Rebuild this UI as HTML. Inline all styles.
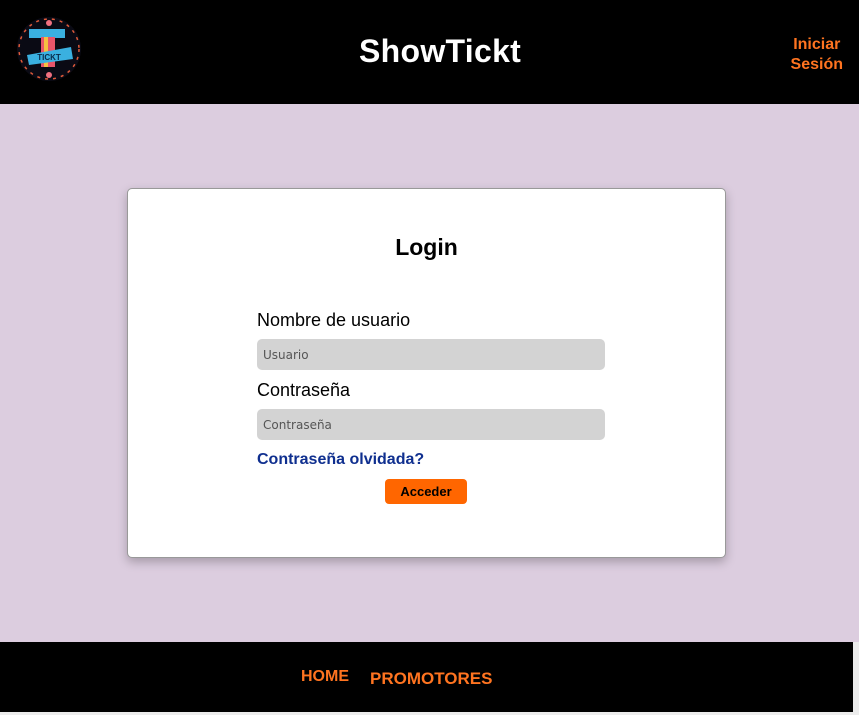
<!DOCTYPE html>
<html><head><meta charset="utf-8"><style>
*{box-sizing:border-box;margin:0;padding:0}
body{width:859px;height:715px;background:#ececec;font-family:"Liberation Sans",Arial,sans-serif;position:relative;overflow:hidden}
.hdr{position:absolute;left:0;top:0;width:859px;height:104px;background:#000}
.title{position:absolute;left:359px;top:33px;color:#fff;font-weight:bold;font-size:32px;letter-spacing:0.3px}
.ini{position:absolute;right:16px;top:35px;color:#ff7420;font-weight:bold;font-size:16px;text-align:center;line-height:20px}
.main{position:absolute;left:0;top:104px;width:859px;height:538px;background:#dccddf}
.card{position:absolute;left:127px;top:188px;width:599px;height:370px;background:#fff;border:1px solid #999;border-radius:5px;box-shadow:0 4px 10px rgba(0,0,0,.25)}
.card h2{position:absolute;top:45px;width:100%;text-align:center;font-size:23px}
.lbl{position:absolute;left:129px;font-size:18px}
.inp{position:absolute;left:129px;width:348px;height:31px;background:#d3d3d3;border-radius:5px;font-size:12px;color:#555;padding:9px 6px;font-family:"DejaVu Sans",sans-serif}
.fg{position:absolute;left:129px;top:262px;color:#0f2f8f;font-weight:bold;font-size:16px}
.btn{position:absolute;left:257px;top:290px;width:82px;height:25px;background:#ff6600;border-radius:4px;font-size:13px;font-weight:bold;text-align:center;line-height:25px}
.ftr{position:absolute;left:0;top:642px;width:853px;height:70px;background:#000}
.ftr span{position:absolute;color:#ff7420;font-weight:bold}
</style></head><body>
<div class="hdr">
<svg style="position:absolute;left:15px;top:15px" width="68" height="68" viewBox="0 0 68 68">
<circle cx="34" cy="34" r="32" fill="#0a0a14"/>
<circle cx="34" cy="34" r="30" fill="none" stroke="#e05a3a" stroke-width="1.5" stroke-dasharray="3 5"/>
<rect x="14" y="14" width="36" height="9" fill="#3ab0e0"/>
<rect x="26" y="22" width="14" height="30" fill="#e8556a"/>
<rect x="29" y="22" width="4" height="30" fill="#f5c040"/>
<polygon points="12,40 56,32 58,44 14,50" fill="#3ab0e0"/>
<text x="34" y="45" font-size="8" font-weight="bold" text-anchor="middle" fill="#0a2a4a" font-family="Liberation Sans">TICKT</text>
<circle cx="34" cy="8" r="3" fill="#f07080"/><circle cx="34" cy="60" r="3" fill="#f07080"/>
</svg>
<div class="title">ShowTickt</div>
<div class="ini">Iniciar<br>Sesión</div>
</div>
<div class="main"></div>
<div class="card">
<h2>Login</h2>
<div class="lbl" style="top:121px">Nombre de usuario</div>
<div class="inp" style="top:150px">Usuario</div>
<div class="lbl" style="top:191px">Contraseña</div>
<div class="inp" style="top:220px">Contraseña</div>
<div class="fg">Contraseña olvidada?</div>
<div class="btn">Acceder</div>
</div>
<div class="ftr">
<span style="left:301px;top:26px;font-size:16px">HOME</span>
<span style="left:370px;top:27px;font-size:17px">PROMOTORES</span>
</div>
</body></html>
